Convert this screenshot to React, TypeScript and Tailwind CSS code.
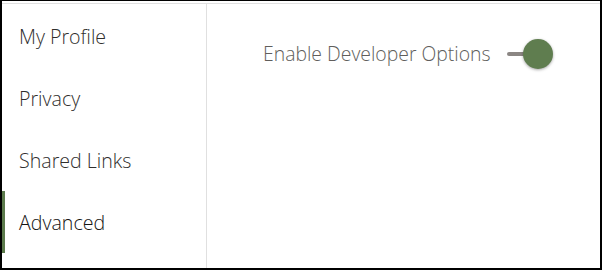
import React from "react";

const navItems = [
  { label: "My Profile", active: false },
  { label: "Privacy", active: false },
  { label: "Shared Links", active: false },
  { label: "Advanced", active: true },
];

export default function App() {
  return (
    <div className="w-[602px] h-[270px] bg-white border-t border-l-2 border-r-2 border-b-2 border-black pt-[2px] font-['Open_Sans',sans-serif]">
      <div className="flex h-full border-t border-[#e0e0e0]">
        {/* Side navigation */}
        <nav className="w-[205px] border-r border-[#e0e0e0] flex flex-col pt-[1px]">
          {navItems.map((item) => (
            <a
              key={item.label}
              href="#"
              className={
                "h-[62px] flex items-center pl-[14px] pt-[2px] text-[19.6px] font-light border-l-[3px] " +
                (item.active
                  ? "border-[#5b7a4b] text-[#161513]"
                  : "border-transparent text-[#2f2e2c]")
              }
            >
              {item.label}
            </a>
          ))}
        </nav>

        {/* Content */}
        <div className="flex-1 pt-[34px] pl-[56px]">
          <label className="flex items-center gap-[16px] h-[32px]">
            <span className="text-[19.4px] font-light text-[#605e5b]">Enable Developer Options</span>
            <span className="relative w-[46px] h-[32px] flex items-center">
              <span className="w-[30px] h-[4px] rounded-full bg-[#8b8683]" />
              <span className="absolute right-0 top-[1px] w-[30px] h-[30px] rounded-full bg-[#5f7d4f] shadow-[0_1px_3px_rgba(0,0,0,0.35)]" />
            </span>
          </label>
        </div>
      </div>
    </div>
  );
}
